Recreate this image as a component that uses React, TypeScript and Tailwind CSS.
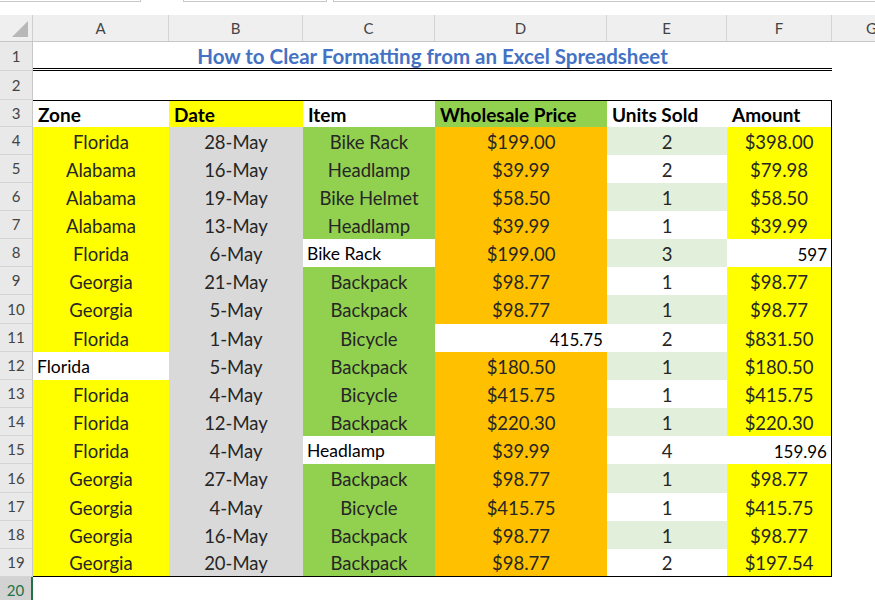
import React from "react";

type Kind = "f" | "pl" | "pr";
type CellDef = [string, Kind];

const COLS = [136, 134, 132, 172, 120, 105];
const COL_BG = ["bg-[#ffff00]", "bg-[#d9d9d9]", "bg-[#92d050]", "bg-[#ffc000]", "", "bg-[#ffff00]"];
const LETTERS = ["A", "B", "C", "D", "E", "F", "G"];

const rows: CellDef[][] = [
  [["Florida", "f"], ["28-May", "f"], ["Bike Rack", "f"], ["$199.00", "f"], ["2", "f"], ["$398.00", "f"]],
  [["Alabama", "f"], ["16-May", "f"], ["Headlamp", "f"], ["$39.99", "f"], ["2", "f"], ["$79.98", "f"]],
  [["Alabama", "f"], ["19-May", "f"], ["Bike Helmet", "f"], ["$58.50", "f"], ["1", "f"], ["$58.50", "f"]],
  [["Alabama", "f"], ["13-May", "f"], ["Headlamp", "f"], ["$39.99", "f"], ["1", "f"], ["$39.99", "f"]],
  [["Florida", "f"], ["6-May", "f"], ["Bike Rack", "pl"], ["$199.00", "f"], ["3", "f"], ["597", "pr"]],
  [["Georgia", "f"], ["21-May", "f"], ["Backpack", "f"], ["$98.77", "f"], ["1", "f"], ["$98.77", "f"]],
  [["Georgia", "f"], ["5-May", "f"], ["Backpack", "f"], ["$98.77", "f"], ["1", "f"], ["$98.77", "f"]],
  [["Florida", "f"], ["1-May", "f"], ["Bicycle", "f"], ["415.75", "pr"], ["2", "f"], ["$831.50", "f"]],
  [["Florida", "pl"], ["5-May", "f"], ["Backpack", "f"], ["$180.50", "f"], ["1", "f"], ["$180.50", "f"]],
  [["Florida", "f"], ["4-May", "f"], ["Bicycle", "f"], ["$415.75", "f"], ["1", "f"], ["$415.75", "f"]],
  [["Florida", "f"], ["12-May", "f"], ["Backpack", "f"], ["$220.30", "f"], ["1", "f"], ["$220.30", "f"]],
  [["Florida", "f"], ["4-May", "f"], ["Headlamp", "pl"], ["$39.99", "f"], ["4", "f"], ["159.96", "pr"]],
  [["Georgia", "f"], ["27-May", "f"], ["Backpack", "f"], ["$98.77", "f"], ["1", "f"], ["$98.77", "f"]],
  [["Georgia", "f"], ["4-May", "f"], ["Bicycle", "f"], ["$415.75", "f"], ["1", "f"], ["$415.75", "f"]],
  [["Georgia", "f"], ["16-May", "f"], ["Backpack", "f"], ["$98.77", "f"], ["1", "f"], ["$98.77", "f"]],
  [["Georgia", "f"], ["20-May", "f"], ["Backpack", "f"], ["$98.77", "f"], ["2", "f"], ["$197.54", "f"]],
];

const RowHeader = ({ n, h, active }: { n: number; h: string; active?: boolean }) => (
  <div
    className={`w-[33px] shrink-0 ${h} flex items-center justify-center text-[15px] ${
      active
        ? "bg-[#d2d2d2] text-[#217346] border-r-2 border-r-[#217346]"
        : "bg-[#e9e9e9] text-[#444] border-r border-r-[#c8c8c8]"
    } border-b border-b-[#d4d4d4]`}
  >
    {n}
  </div>
);

export default function App() {
  const colW = ["w-[136px]", "w-[134px]", "w-[132px]", "w-[172px]", "w-[120px]", "w-[105px]"];
  return (
    <div className="w-[875px] h-[600px] overflow-hidden bg-white font-['Lato','Open_Sans',sans-serif] text-black">
      {/* top strip */}
      <div className="h-[15px] flex">
        <div className="w-[141px] h-[2px] border-b border-r border-[#c8c8c8]" />
        <div className="w-[42px]" />
        <div className="w-[144px] h-[2px] border-b border-l border-r border-[#c8c8c8]" />
        <div className="w-[6px]" />
        <div className="flex-1 h-[2px] border-b border-l border-[#c8c8c8]" />
      </div>
      {/* column header */}
      <div className="h-[27px] flex bg-[#efefef] border-b border-[#c6c6c6]">
        <div className="w-[33px] shrink-0 relative border-r border-[#d0d0d0]">
          <svg className="absolute left-[12px] top-[6px]" width="16" height="16" viewBox="0 0 16 16">
            <polygon points="16,0 16,16 0,16" fill="#b8b8b8" />
          </svg>
        </div>
        {COLS.map((w, i) => (
          <div
            key={i}
            className={`${colW[i]} shrink-0 flex items-center justify-center text-[15px] text-[#444] border-r border-[#d4d4d4]`}
          >
            {LETTERS[i]}
          </div>
        ))}
        <div className="flex-1 flex items-center text-[15px] text-[#444] pl-[34px]">G</div>
      </div>
      {/* row 1 */}
      <div className="flex">
        <RowHeader n={1} h="h-[29px]" />
        <div className="w-[799px] h-[29px] border-b-[3px] border-double border-black flex items-center justify-center pt-[3px] text-[20.5px] font-bold text-[#4472c4] whitespace-nowrap">
          How to Clear Formatting from an Excel Spreadsheet
        </div>
      </div>
      {/* row 2 */}
      <div className="flex">
        <RowHeader n={2} h="h-[29px]" />
      </div>
      {/* row 3 */}
      <div className="flex">
        <RowHeader n={3} h="h-[27px]" />
        <div className="flex border-t border-r border-black h-[27px]">
          {["Zone", "Date", "Item", "Wholesale Price", "Units Sold", "Amount"].map((t, i) => {
            const bg = i === 1 ? "bg-[#ffff00]" : i === 3 ? "bg-[#92d050]" : "bg-white";
            return (
              <div
                key={i}
                className={`${i === 5 ? "w-[104px]" : colW[i]} ${bg} flex items-center pl-[5px] pt-[2px] text-[19px] font-bold whitespace-nowrap overflow-hidden`}
              >
                {t}
              </div>
            );
          })}
        </div>
      </div>
      {/* data rows */}
      {rows.map((r, ri) => {
        const rowNum = ri + 4;
        const h = rowNum === 10 || rowNum === 16 ? "h-[29px]" : "h-[28px]";
        const last = ri === rows.length - 1;
        return (
          <div key={ri} className="flex">
            <RowHeader n={rowNum} h={h} />
            <div className={`flex border-r border-black ${last ? "border-b" : ""} ${h}`}>
              {r.map(([t, k], ci) => {
                let bg = COL_BG[ci];
                if (ci === 4) bg = ri % 2 === 0 ? "bg-[#e2efda]" : "bg-white";
                if (k !== "f") bg = "bg-white";
                const align =
                  k === "f"
                    ? "justify-center text-[18.5px] text-[#262626]"
                    : k === "pl"
                    ? "justify-start pl-[4px] text-[17.5px] text-black"
                    : "justify-end pr-[4px] text-[17px] text-black";
                return (
                  <div
                    key={ci}
                    className={`${ci === 5 ? "w-[104px]" : colW[ci]} ${bg} flex items-center pt-[3px] whitespace-nowrap ${align}`}
                  >
                    {t}
                  </div>
                );
              })}
            </div>
          </div>
        );
      })}
      {/* row 20 */}
      <div className="flex">
        <RowHeader n={20} h="h-[28px]" active />
      </div>
    </div>
  );
}
